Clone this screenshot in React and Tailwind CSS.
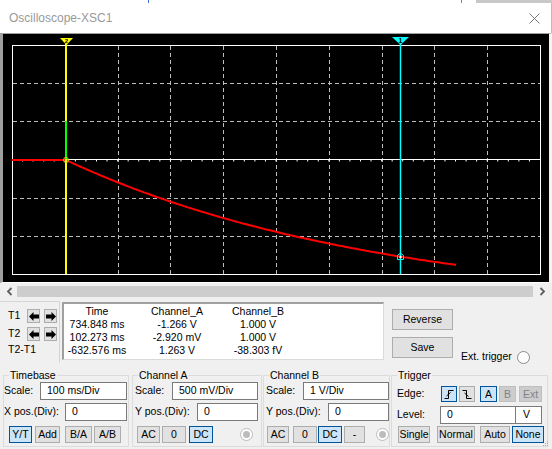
import React from 'react'

// trace of channel A (RC discharge), page coordinates
const trace = ['12,160', '66,160']
for (let x = 68; x <= 456; x += 2) {
  const t = ((x - 12) / 52.8) * 100
  const v = 1.94 * (1 - Math.exp(-(t - 102) / 600))
  trace.push(`${x},${(160 + v * 76.33).toFixed(1)}`)
}
const vLines = [1, 2, 3, 4, 5, 6, 7, 8, 9].map((i) => Math.round(12 + 52.8 * i) + 0.5)
const hLines = [1, 2, 4, 5].map((i) => Math.round(45 + 38.17 * i) + 0.5)
const ticks = []
for (let i = 1; i < 50; i++) ticks.push(12 + i * 10.56)

const btn = 'flex items-center justify-center border text-[10.5px] leading-none'
const btnN = 'bg-[#e1e1e1] border-[#adadad] text-black'
const btnS = 'bg-[#cce4f7] border-[#005499] text-black'
const btnD = 'bg-[#cccccc] border-[#bfbfbf] text-[#838383]'
const field = 'h-[18px] bg-white border border-[#7a7a7a] flex items-center pl-[6px] text-[10.5px]'

function Group({ title, className, children }) {
  return (
    <div className={`relative h-[72px] border border-[#dcdcdc] ${className}`}>
      <span className="absolute -top-[7px] left-[5px] px-[1px] bg-[#f0f0f0] text-[10.5px] leading-[13px]">{title}</span>
      {children}
    </div>
  )
}

function Arrow({ dir }) {
  return (
    <div className="w-[13px] h-[14px] bg-[#e1e1e1] border border-[#adadad] flex items-center justify-center">
      <svg width="10" height="9" viewBox="0 0 10 9">
        {dir === 'l' ? (
          <polygon points="0,4.5 4.5,0 4.5,2.5 10,2.5 10,6.5 4.5,6.5 4.5,9" fill="#000" />
        ) : (
          <polygon points="10,4.5 5.5,0 5.5,2.5 0,2.5 0,6.5 5.5,6.5 5.5,9" fill="#000" />
        )}
      </svg>
    </div>
  )
}

function Radio({ filled }) {
  return (
    <div className={`w-[13px] h-[13px] rounded-full border bg-white flex items-center justify-center ${filled ? 'border-[#bcbcbc]' : 'border-[#8a8a8a]'}`}>
      {filled && <div className="w-[7px] h-[7px] rounded-full bg-[#bcbcbc]" />}
    </div>
  )
}

export default function App() {
  return (
    <div className="relative w-[552px] h-[449px] overflow-hidden bg-[#f0f0f0] text-black font-['Liberation_Sans',Arial,sans-serif]">
      {/* behind the window */}
      <div className="flex h-[3px] bg-white">
        <div className="w-[148px]" />
        <div className="w-[1px] bg-[#3b6fd8]" />
        <div className="w-[312px]" />
        <div className="w-[1px] bg-[#888]" />
        <div className="w-[14px]" />
        <div className="flex-1 bg-[#c8c8c8]" />
      </div>

      {/* title bar */}
      <div className="h-[30px] bg-white flex items-center justify-between pl-[9px] pr-[11px] border-r border-[#bdbdbd]">
        <span className="text-[12px] text-[#999]">Oscilloscope-XSC1</span>
        <svg width="11" height="11" viewBox="0 0 11 11">
          <path d="M0.5 0.5 L10.5 10.5 M10.5 0.5 L0.5 10.5" stroke="#777" strokeWidth="1" />
        </svg>
      </div>

      {/* screen */}
      <div className="h-[250px] border-t border-t-[#a0a0a0] border-l-[3px] border-l-[#a0a0a0] border-b border-b-white border-r-[3px] border-r-[#f4f4f4]">
        <div className="w-[546px] h-[248px] bg-black">
          <svg width="546" height="248" viewBox="3 34 546 248">
            {vLines.map((x) => (
              <line key={x} x1={x} y1="46" x2={x} y2="274" stroke="#bdbdbd" strokeDasharray="4 3" />
            ))}
            {hLines.map((y) => (
              <line key={y} x1="13" y1={y} x2="540" y2={y} stroke="#bdbdbd" strokeDasharray="4 3" />
            ))}
            <rect x="12.5" y="45.5" width="528" height="229" fill="none" stroke="#fff" />
            <line x1="12" y1="159.5" x2="540" y2="159.5" stroke="#fff" />
            {ticks.map((x) => (
              <line key={x} x1={x} y1="160" x2={x} y2="161.5" stroke="#fff" />
            ))}
            <polyline points={trace.join(' ')} fill="none" stroke="#ff0000" strokeWidth="2" />

            {/* cursor 2 */}
            <line x1="66" y1="44" x2="66" y2="274" stroke="#ffff00" strokeWidth="2" />
            <line x1="66" y1="121" x2="66" y2="159" stroke="#00ff00" strokeWidth="2" />
            <polygon points="60,38 73,38 66.5,45" fill="#ffff00" />
            <text x="66.5" y="43" fontSize="6" fontWeight="bold" textAnchor="middle" fill="#000" fontFamily="Liberation Sans">2</text>
            <circle cx="66" cy="160" r="2.5" fill="none" stroke="#d8e000" strokeWidth="1" />

            {/* cursor 1 */}
            <line x1="400.5" y1="44" x2="400.5" y2="274" stroke="#00ffff" strokeWidth="1.5" />
            <polygon points="392,37 409,37 400.5,45" fill="#00ffff" />
            <text x="400.5" y="43" fontSize="7" fontWeight="bold" textAnchor="middle" fill="#000" fontFamily="Liberation Sans">1</text>
            <path d="M397.5 259.5 V255.5 L400.5 253 L403.5 255.5 V259.5 Z" fill="none" stroke="#00ffff" strokeWidth="1" />
            <circle cx="400.5" cy="257" r="1.2" fill="#fff" />
          </svg>
        </div>
      </div>

      {/* scrollbar */}
      <div className="h-[16px] flex items-center">
        <svg className="ml-[6px]" width="7" height="9" viewBox="0 0 7 9">
          <path d="M5.5 1 L2 4.5 L5.5 8" fill="none" stroke="#606060" strokeWidth="1.8" />
        </svg>
        <div className="ml-[4px] w-[516px] h-[11px] bg-[#cdcdcd]" />
        <svg className="ml-[6px]" width="7" height="9" viewBox="0 0 7 9">
          <path d="M1.5 1 L5 4.5 L1.5 8" fill="none" stroke="#606060" strokeWidth="1.8" />
        </svg>
      </div>

      {/* readout row */}
      <div className="flex h-[67px] items-start text-[10.5px]">
        <div className="mt-[2px] w-[60px] h-[62px] border-t border-r border-[#d5d5d5] pt-[7px] pl-[8px]">
          <div className="flex items-center h-[14px]">
            <span className="w-[19px]">T1</span>
            <Arrow dir="l" />
            <div className="w-[4px]" />
            <Arrow dir="r" />
          </div>
          <div className="flex items-center h-[14px] mt-[4px]">
            <span className="w-[19px]">T2</span>
            <Arrow dir="l" />
            <div className="w-[4px]" />
            <Arrow dir="r" />
          </div>
          <div className="mt-[2px] leading-[13px]">T2-T1</div>
        </div>

        <div className="ml-[2px] mt-[3px] w-[322px] h-[58px] bg-white border-t-2 border-l-2 border-[#a0a0a0] border-r border-b border-r-[#dadada] border-b-[#dadada] grid grid-cols-[66px_94px_68px] auto-rows-[13px] leading-[13px] text-center pt-[1px]">
          <span>Time</span>
          <span>Channel_A</span>
          <span>Channel_B</span>
          <span>734.848 ms</span>
          <span>-1.266 V</span>
          <span>1.000 V</span>
          <span>102.273 ms</span>
          <span>-2.920 mV</span>
          <span>1.000 V</span>
          <span>-632.576 ms</span>
          <span>1.263 V</span>
          <span>-38.303 fV</span>
        </div>

        <div className="ml-[8px] mt-[10px] w-[61px] flex flex-col">
          <div className={`${btn} ${btnN} h-[21px]`}>Reverse</div>
          <div className={`${btn} ${btnN} h-[21px] mt-[7px]`}>Save</div>
        </div>

        <div className="ml-[8px] mt-[51px] h-[14px] flex items-center">
          <span>Ext. trigger</span>
          <div className="ml-[5px]">
            <Radio />
          </div>
        </div>
      </div>

      {/* control groups */}
      <div className="flex items-start mt-[9px] text-[10.5px]">
        <Group title="Timebase" className="ml-[3px] w-[126px]">
          <div className="pt-[6px]">
            <div className="flex items-center">
              <span className="w-[36px]">Scale:</span>
              <div className={`${field} w-[87px]`}>100 ms/Div</div>
            </div>
            <div className="flex items-center mt-[3px]">
              <span className="w-[61px]">X pos.(Div):</span>
              <div className={`${field} w-[62px]`}>0</div>
            </div>
            <div className="flex items-center mt-[5px] pl-[5px] h-[17px]">
              <div className={`${btn} ${btnS} w-[23px] h-[17px]`}>Y/T</div>
              <div className={`${btn} ${btnN} w-[25px] h-[17px] ml-[3px]`}>Add</div>
              <div className={`${btn} ${btnN} w-[27px] h-[17px] ml-[5px]`}>B/A</div>
              <div className={`${btn} ${btnN} w-[27px] h-[17px] ml-[2px]`}>A/B</div>
            </div>
          </div>
        </Group>

        <Group title="Channel A" className="ml-[3px] w-[130px]">
          <div className="pt-[6px] pl-[2px]">
            <div className="flex items-center">
              <span className="w-[37px]">Scale:</span>
              <div className={`${field} w-[86px]`}>500 mV/Div</div>
            </div>
            <div className="flex items-center mt-[3px]">
              <span className="w-[62px]">Y pos.(Div):</span>
              <div className={`${field} w-[61px]`}>0</div>
            </div>
            <div className="flex items-center mt-[5px] pl-[2px] h-[17px]">
              <div className={`${btn} ${btnN} w-[23px] h-[17px]`}>AC</div>
              <div className={`${btn} ${btnN} w-[24px] h-[17px] ml-[2px]`}>0</div>
              <div className={`${btn} ${btnS} w-[24px] h-[17px] ml-[3px]`}>DC</div>
              <div className="ml-[27px]">
                <Radio filled />
              </div>
            </div>
          </div>
        </Group>

        <Group title="Channel B" className="ml-[1px] w-[127px]">
          <div className="pt-[6px] pl-[2px]">
            <div className="flex items-center">
              <span className="w-[37px]">Scale:</span>
              <div className={`${field} w-[86px]`}>1 V/Div</div>
            </div>
            <div className="flex items-center mt-[3px]">
              <span className="w-[62px]">Y pos.(Div):</span>
              <div className={`${field} w-[61px]`}>0</div>
            </div>
            <div className="flex items-center mt-[5px] pl-[1px] h-[17px]">
              <div className={`${btn} ${btnN} w-[22px] h-[17px]`}>AC</div>
              <div className={`${btn} ${btnN} w-[24px] h-[17px] ml-[4px]`}>0</div>
              <div className={`${btn} ${btnS} w-[24px] h-[17px] ml-[1px]`}>DC</div>
              <div className={`${btn} ${btnN} w-[21px] h-[17px] ml-[2px]`}>-</div>
              <div className="ml-[11px]">
                <Radio filled />
              </div>
            </div>
          </div>
        </Group>

        <Group title="Trigger" className="ml-[1px] w-[157px]">
          <div className="pt-[10px] pl-[5px]">
            <div className="flex items-center h-[16px]">
              <span className="w-[44px]">Edge:</span>
              <div className={`${btn} ${btnS} w-[16px] h-[16px]`}>
                <svg width="10" height="10" viewBox="0 0 10 10">
                  <path d="M0.5 9.5 H4.5 V1.5 H9.5 M2.5 7 L6.5 3.5" fill="none" stroke="#000" strokeWidth="1" />
                </svg>
              </div>
              <div className={`${btn} ${btnN} w-[16px] h-[16px] ml-[2px]`}>
                <svg width="10" height="10" viewBox="0 0 10 10">
                  <path d="M0.5 1.5 H4.5 V9.5 H9.5 M2.5 4 L6.5 7.5" fill="none" stroke="#000" strokeWidth="1" />
                </svg>
              </div>
              <div className={`${btn} ${btnS} w-[17px] h-[16px] ml-[5px]`}>A</div>
              <div className={`${btn} ${btnD} w-[17px] h-[16px] ml-[2px]`}>B</div>
              <div className={`${btn} ${btnD} w-[23px] h-[16px] ml-[3px]`}>Ext</div>
            </div>
            <div className="flex items-center mt-[4px]">
              <span className="w-[43px]">Level:</span>
              <div className={`${field} w-[76px] pl-[4px]`}>0</div>
              <div className="h-[18px] w-[26px] bg-white border border-[#7a7a7a] border-l-0 flex items-center pl-[7px]">V</div>
            </div>
            <div className="flex items-center mt-[2px] pl-[1px] h-[17px]">
              <div className={`${btn} ${btnN} w-[32px] h-[17px]`}>Single</div>
              <div className={`${btn} ${btnN} w-[38px] h-[17px] ml-[7px]`}>Normal</div>
              <div className={`${btn} ${btnN} w-[30px] h-[17px] ml-[5px]`}>Auto</div>
              <div className={`${btn} ${btnS} w-[32px] h-[17px] ml-[2px]`}>None</div>
            </div>
          </div>
        </Group>
      </div>

      {/* resize grip */}
      <svg className="absolute right-[3px] bottom-[2px]" width="7" height="7" viewBox="0 0 7 7">
        <rect x="5" y="1" width="1" height="1" fill="#aaa" />
        <rect x="3" y="3" width="1" height="1" fill="#aaa" />
        <rect x="5" y="3" width="1" height="1" fill="#aaa" />
        <rect x="1" y="5" width="1" height="1" fill="#aaa" />
        <rect x="3" y="5" width="1" height="1" fill="#aaa" />
        <rect x="5" y="5" width="1" height="1" fill="#aaa" />
      </svg>
    </div>
  )
}
